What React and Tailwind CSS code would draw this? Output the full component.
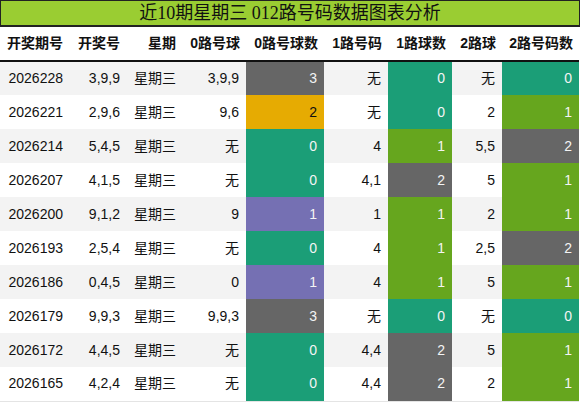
import React from "react";

const T = "bg-[#1b9e77] text-[#f4f4f4]";
const O = "bg-[#66a61e] text-[#f4f4f4]";
const G = "bg-[#666666] text-[#f4f4f4]";
const Y = "bg-[#e6ab02] text-[#111111]";
const P = "bg-[#7570b3] text-[#f4f4f4]";

const rows = [
  ["2026228", "3,9,9", "3,9,9", ["3", G], "无", ["0", T], "无", ["0", T]],
  ["2026221", "2,9,6", "9,6", ["2", Y], "无", ["0", T], "2", ["1", O]],
  ["2026214", "5,4,5", "无", ["0", T], "4", ["1", O], "5,5", ["2", G]],
  ["2026207", "4,1,5", "无", ["0", T], "4,1", ["2", G], "5", ["1", O]],
  ["2026200", "9,1,2", "9", ["1", P], "1", ["1", O], "2", ["1", O]],
  ["2026193", "2,5,4", "无", ["0", T], "4", ["1", O], "2,5", ["2", G]],
  ["2026186", "0,4,5", "0", ["1", P], "4", ["1", O], "5", ["1", O]],
  ["2026179", "9,9,3", "9,9,3", ["3", G], "无", ["0", T], "无", ["0", T]],
  ["2026172", "4,4,5", "无", ["0", T], "4,4", ["2", G], "5", ["1", O]],
  ["2026165", "4,2,4", "无", ["0", T], "4,4", ["2", G], "2", ["1", O]],
];

const headers = ["开奖期号", "开奖号", "星期", "0路号球", "0路号球数", "1路号码", "1路球数", "2路球", "2路号码数"];
const widths = ["w-[69px]", "w-[57px]", "w-[56px]", "w-[64px]", "w-[78px]", "w-[64px]", "w-[64px]", "w-[50px]", "w-[77px]"];

export default function App() {
  return (
    <div className="w-[580px] h-[404px] bg-white overflow-hidden font-['Liberation_Sans','Noto_Sans_CJK_SC',sans-serif] text-[14px] text-[#111]">
      <div className="h-[27px] w-[580px] bg-[#9acd32] border-t border-x border-b-2 border-[#222] flex items-center justify-center font-['Liberation_Serif','Noto_Sans_CJK_SC',serif] text-[18px] leading-none text-[#111]">
        近10期星期三 012路号码数据图表分析
      </div>
      <table className="table-fixed border-collapse w-[579px] border-b border-[#e4e4e4]">
        <colgroup>
          {widths.map((w, i) => (
            <col key={i} className={w} />
          ))}
        </colgroup>
        <thead>
          <tr className="h-[34px] border-b-2 border-[#111]">
            {headers.map((h) => (
              <th key={h} className="text-right pr-[6px] pl-0 font-bold text-[14px] whitespace-nowrap">
                {h}
              </th>
            ))}
          </tr>
        </thead>
        <tbody>
          {rows.map((r, i) => (
            <tr key={r[0]} className={`h-[34px] ${i % 2 === 0 ? "bg-[#f3f3f3]" : "bg-white"}`}>
              <td className="text-right pr-[6px]">{r[0]}</td>
              <td className="text-right pr-[6px]">{r[1]}</td>
              <td className="text-right pr-[6px]">星期三</td>
              <td className="text-right pr-[7px]">{r[2]}</td>
              <td className={`text-right pr-[7px] ${r[3][1]}`}>{r[3][0]}</td>
              <td className="text-right pr-[7px]">{r[4]}</td>
              <td className={`text-right pr-[7px] ${r[5][1]}`}>{r[5][0]}</td>
              <td className="text-right pr-[7px]">{r[6]}</td>
              <td className={`text-right pr-[7px] ${r[7][1]}`}>{r[7][0]}</td>
            </tr>
          ))}
        </tbody>
      </table>
    </div>
  );
}
